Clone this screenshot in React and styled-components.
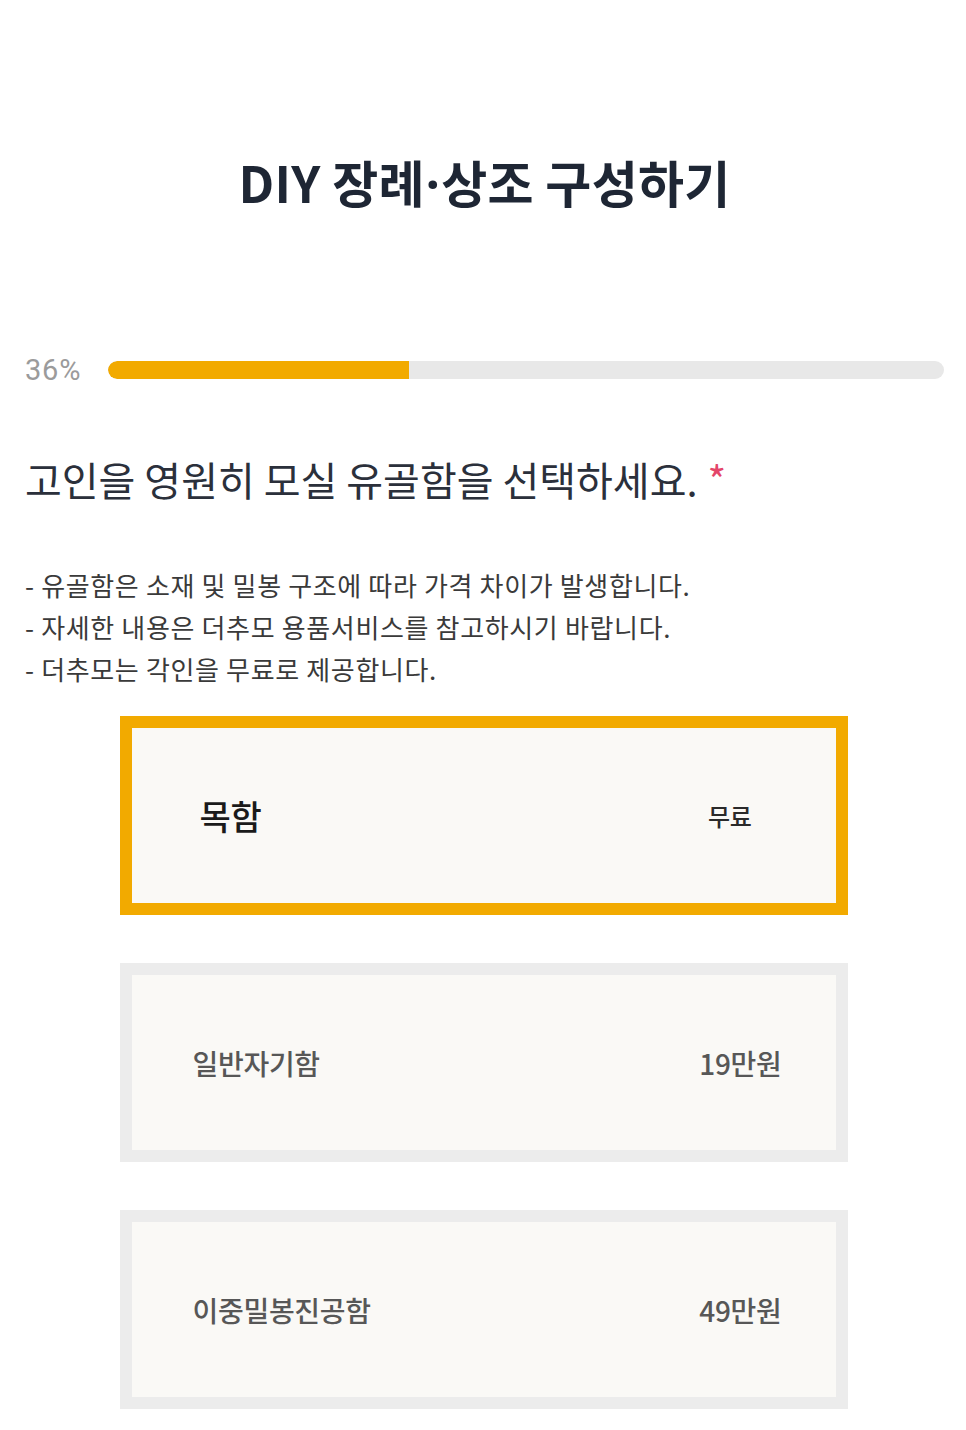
import React from "react";
import styled, { createGlobalStyle } from "styled-components";

const GlobalStyle = createGlobalStyle`
  html, body {
    margin: 0;
    padding: 0;
    background: #ffffff;
  }
  body {
    font-family: "Noto Sans CJK KR", "Noto Sans", sans-serif;
    -webkit-font-smoothing: antialiased;
  }
  * { box-sizing: border-box; }
`;

const Page = styled.div`
  width: 966px;
  min-height: 1430px;
  padding: 0 22px 0 25px;
  display: flex;
  flex-direction: column;
`;

const Title = styled.h1`
  margin: 148px 0 0;
  text-align: center;
  font-size: 50px;
  line-height: 66px;
  font-weight: 700;
  color: #1e2634;
  letter-spacing: 0.3px;
`;

const Dot = styled.span`
  font-family: "Noto Sans", sans-serif;
  font-weight: 700;
  margin: 0 1px;
`;

const ProgressRow = styled.div`
  margin-top: 138px;
  display: flex;
  align-items: center;
  gap: 26px;
  height: 30px;
`;

const Percent = styled.span`
  font-family: "Roboto", "Noto Sans", sans-serif;
  font-size: 29px;
  color: #9b9b9b;
  letter-spacing: 0.8px;
  width: 57px;
`;

const Track = styled.div`
  flex: 1;
  height: 18px;
  border-radius: 9px;
  background: #e8e8e8;
  overflow: hidden;
`;

const Fill = styled.div`
  height: 100%;
  background: #f2aa00;
  border-radius: 9px 0 0 9px;
`;

const Question = styled.h2`
  margin: 69px 0 0;
  font-size: 40px;
  line-height: 50px;
  font-weight: 400;
  color: #2b303b;
  letter-spacing: 0;
`;

const Required = styled.span`
  color: #e4466a;
  margin-left: 10px;
`;

const Notes = styled.ul`
  list-style: none;
  margin: 60px 0 0;
  padding: 0;
`;

const Note = styled.li`
  font-size: 26px;
  line-height: 42px;
  color: #3a3a3a;
  letter-spacing: 0.65px;
`;

const Options = styled.div`
  margin: 26px 2px 0 0;
  display: flex;
  flex-direction: column;
  align-items: center;
  gap: 48px;
`;

const Card = styled.div`
  width: 728px;
  height: 199px;
  border: 12px solid ${(p) => (p.$selected ? "#f2aa00" : "#ececec")};
  background: #faf9f6;
  display: flex;
  align-items: center;
  justify-content: space-between;
  padding: ${(p) => (p.$selected ? "0 84px 0 68px" : "0 54px 0 61px")};
`;

const Name = styled.span`
  font-size: ${(p) => (p.$selected ? "34px" : "28px")};
  font-weight: 500;
  color: ${(p) => (p.$selected ? "#1a1a1a" : "#575757")};
  letter-spacing: -0.3px;
`;

const Price = styled.span`
  font-size: ${(p) => (p.$selected ? "24px" : "28px")};
  font-weight: 500;
  color: ${(p) => (p.$selected ? "#2a2a2a" : "#575757")};
  letter-spacing: -0.3px;
`;

const options = [
  { name: "목함", price: "무료", selected: true },
  { name: "일반자기함", price: "19만원" },
  { name: "이중밀봉진공함", price: "49만원" },
];

export default function App() {
  const progress = 36;
  return (
    <>
      <GlobalStyle />
      <Page>
        <Title>
          DIY 장례<Dot>·</Dot>상조 구성하기
        </Title>
        <ProgressRow>
          <Percent>{progress}%</Percent>
          <Track>
            <Fill style={{ width: `${progress}%` }} />
          </Track>
        </ProgressRow>
        <Question>
          고인을 영원히 모실 유골함을 선택하세요.<Required>*</Required>
        </Question>
        <Notes>
          <Note>- 유골함은 소재 및 밀봉 구조에 따라 가격 차이가 발생합니다.</Note>
          <Note>- 자세한 내용은 더추모 용품서비스를 참고하시기 바랍니다.</Note>
          <Note>- 더추모는 각인을 무료로 제공합니다.</Note>
        </Notes>
        <Options>
          {options.map((o) => (
            <Card key={o.name} $selected={o.selected}>
              <Name $selected={o.selected}>{o.name}</Name>
              <Price $selected={o.selected}>{o.price}</Price>
            </Card>
          ))}
        </Options>
      </Page>
    </>
  );
}
